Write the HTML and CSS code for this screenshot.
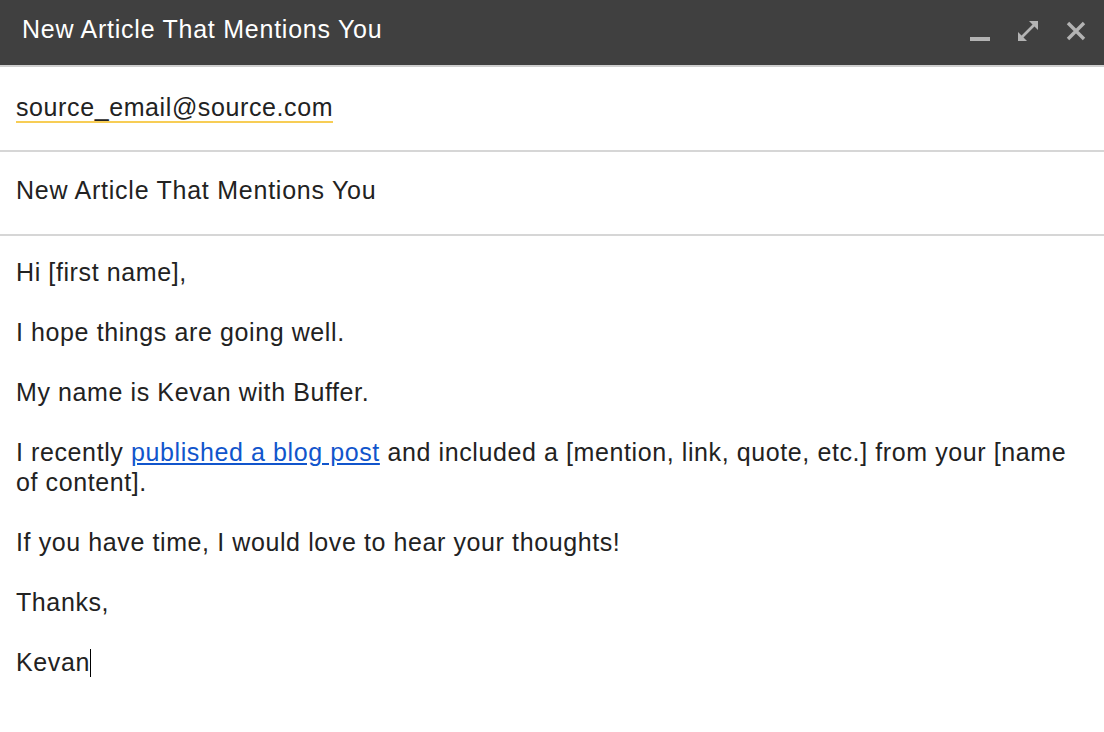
FILE: index.html
```html
<!DOCTYPE html>
<html>
<head>
<meta charset="utf-8">
<link rel="stylesheet" href="styles.css">
</head>
<body>
<div class="compose">
  <div class="titlebar">
    <div class="title">New Article That Mentions You</div>
    <div class="controls">
      <svg class="ico" width="20" height="20" viewBox="0 0 20 20"><rect x="0" y="16" width="20" height="4" fill="#b3b3b3"/></svg>
      <svg class="ico" width="20" height="20" viewBox="0 0 20 20"><path d="M2 18 L18 2" stroke="#b3b3b3" stroke-width="2.6"/><path d="M11 0 H20 V9 Z" fill="#b3b3b3"/><path d="M0 11 V20 H9 Z" fill="#b3b3b3"/></svg>
      <svg class="ico" width="20" height="20" viewBox="0 0 20 20"><path d="M2 2 L18 18 M18 2 L2 18" stroke="#b3b3b3" stroke-width="3.4"/></svg>
    </div>
  </div>
  <div class="row to-row"><span class="recipient">source_email@source.com</span></div>
  <div class="row subject-row">New Article That Mentions You</div>
  <div class="body">
    <p>Hi [first name],</p>
    <p>I hope things are going well.</p>
    <p>My name is Kevan with Buffer.</p>
    <p>I recently <a href="#">published a blog post</a> and included a [mention, link, quote, etc.] from your [name of content].</p>
    <p>If you have time, I would love to hear your thoughts!</p>
    <p>Thanks,</p>
    <p>Kevan<span class="caret"></span></p>
  </div>
</div>
</body>
</html>
```

FILE: styles.css
```css
html, body {
  margin: 0;
  padding: 0;
  background: #ffffff;
}
body {
  font-family: "Liberation Sans", Arial, sans-serif;
  color: #222222;
  letter-spacing: 0.6px;
}
.compose {
  width: 1104px;
}
.titlebar {
  height: 65px;
  background: #404040;
  border-bottom: 2px solid #cfcfcf;
  display: flex;
  align-items: center;
  justify-content: space-between;
  padding: 0 18px 0 22px;
}
.title {
  color: #ffffff;
  font-size: 25px;
  letter-spacing: 0.75px;
  margin-top: -6px;
}
.controls {
  display: flex;
  gap: 28px;
  align-items: center;
  margin-top: -4px;
}
.ico {
  display: block;
}
.row {
  font-size: 25px;
  padding: 0 16px;
  border-bottom: 2px solid #d6d6d6;
  display: flex;
  align-items: center;
}
.to-row {
  height: 83px;
}
.recipient {
  border-bottom: 2px solid #f7cd55;
  line-height: 28px;
  margin-top: -2px;
}
.subject-row {
  box-sizing: border-box;
  height: 84px;
  padding-bottom: 6px;
  letter-spacing: 0.75px;
}
.body {
  padding: 21px 18px 0 16px;
  font-size: 25px;
  line-height: 30px;
}
.body p {
  margin: 0 0 30px 0;
}
.body a {
  color: #1155cc;
  text-decoration: underline;
}
.caret {
  display: inline-block;
  width: 1px;
  height: 28px;
  background: #000;
  vertical-align: -6px;
}
```
